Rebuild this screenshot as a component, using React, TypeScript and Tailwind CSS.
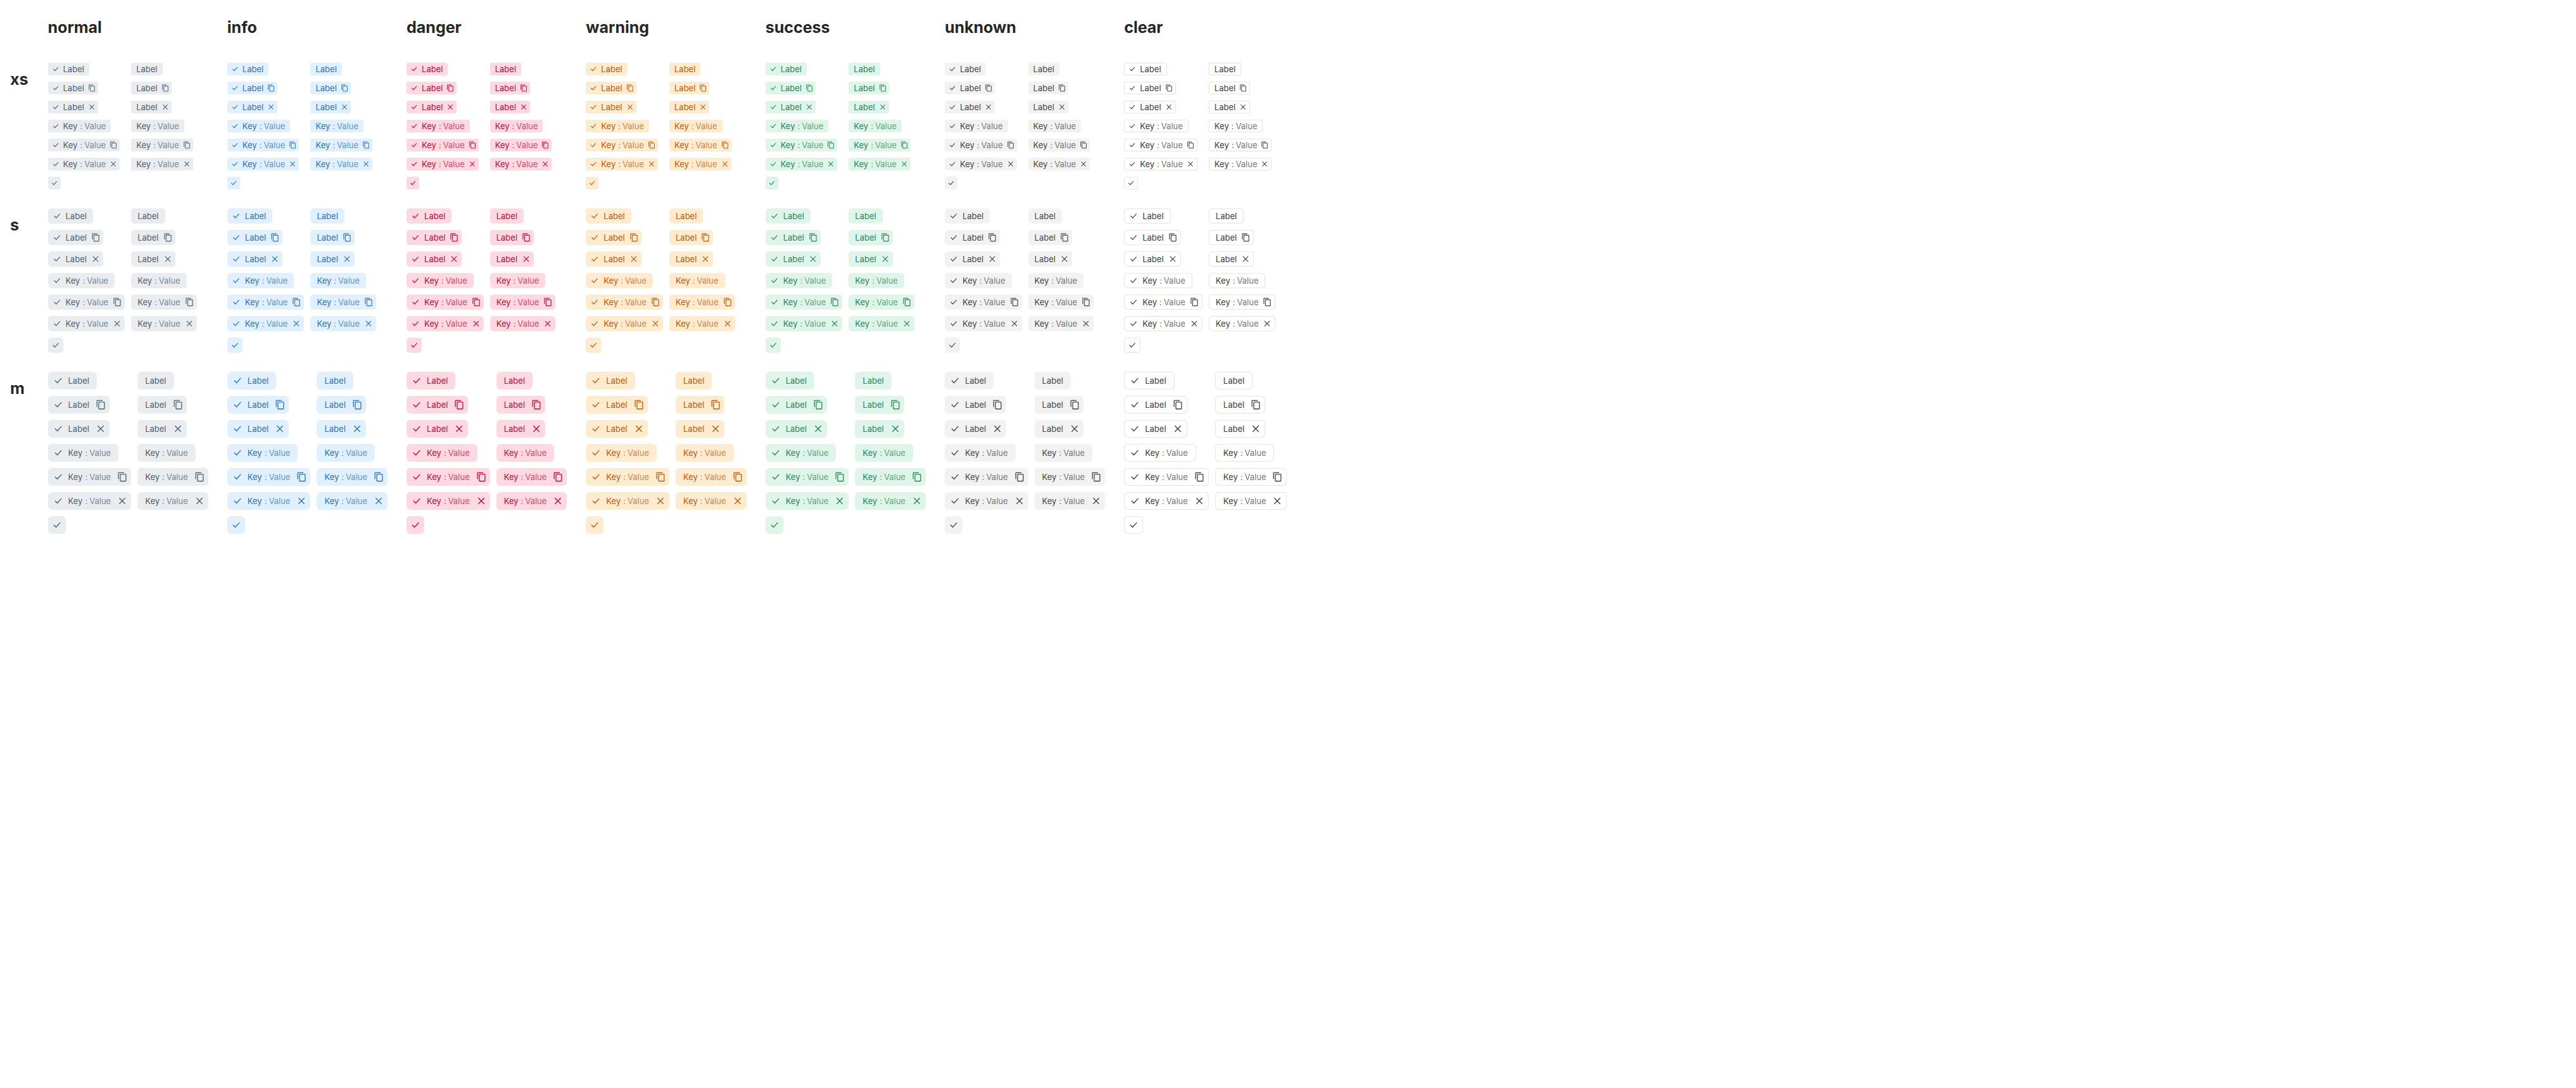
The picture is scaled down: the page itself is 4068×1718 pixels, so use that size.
import React from 'react';

type Size = 'xs' | 's' | 'm';
type Action = 'copy' | 'close';

const themes = [
  { name: 'normal', chip: 'bg-[#e9edf0] text-[#4d6073]' },
  { name: 'info', chip: 'bg-[#e0f0fe] text-[#2f72b8]' },
  { name: 'danger', chip: 'bg-[#ffd9e1] text-[#bf0a3a]' },
  { name: 'warning', chip: 'bg-[#ffebd0] text-[#bf5a0a]' },
  { name: 'success', chip: 'bg-[#dff5e9] text-[#2b8556]' },
  { name: 'unknown', chip: 'bg-[#f2f2f2] text-[#474747]' },
  { name: 'clear', chip: 'border-x border-[#e5e5e5] shadow-[inset_0_1px_0_#e5e5e5,inset_0_-1px_0_#e5e5e5] text-[#404040]' },
];

const sizes: Size[] = ['xs', 's', 'm'];

const styles = {
  xs: { grid: 'grid-cols-[1fr_1fr]', chip: 'h-5 rounded-[3px]', lead: 'w-6', square: 'w-5', icon: 'size-3', padStart: 'pl-2', padEnd: 'pr-2', action: 'ml-0.5 size-5' },
  s: { grid: 'grid-cols-[1fr_1fr]', chip: 'h-6 rounded-[5px]', lead: 'w-7', square: 'w-6', icon: 'size-3.5', padStart: 'pl-2.5', padEnd: 'pr-2.5', action: 'ml-0.5 size-6' },
  m: { grid: 'grid-cols-[auto_auto]', chip: 'h-7 rounded-md', lead: 'w-8', square: 'w-7', icon: 'size-4', padStart: 'pl-3', padEnd: 'pr-3', action: 'ml-1 size-7' },
};

function CheckIcon({ className }: { className: string }) {
  return (
    <svg viewBox="0 0 16 16" fill="none" stroke="currentColor" strokeWidth="1.4" className={className} aria-hidden="true">
      <path d="M2.900 7.700l3.700 3.800L13.200 4.100" />
    </svg>
  );
}

function CopyIcon({ className }: { className: string }) {
  return (
    <svg viewBox="0 0 16 16" fill="currentColor" className={className} aria-hidden="true">
      <path d="M11 .7H2.900C2.100.7 1.500 1.300 1.500 2.100V11.500h1.300V2H11zM13.100 3.200H5.700c-.8 0-1.400.6-1.400 1.400v9.400c0 .8.6 1.400 1.400 1.400h7.400c.8 0 1.400-.6 1.400-1.400V4.600c0-.8-.6-1.400-1.400-1.400zm.1 10.900H5.600V4.500h7.600z" />
    </svg>
  );
}

function CloseIcon({ className }: { className: string }) {
  return (
    <svg viewBox="0 0 16 16" fill="none" stroke="currentColor" strokeWidth="1.4" className={className} aria-hidden="true">
      <path d="M3.300 3.300l9.400 9.400M12.700 3.300l-9.400 9.400" />
    </svg>
  );
}

interface ChipProps {
  size: Size;
  theme: string;
  icon?: boolean;
  text?: string;
  value?: string;
  action?: Action;
}

function Chip({ size, theme, icon, text, value, action }: ChipProps) {
  const s = styles[size];
  return (
    <div className={`inline-flex items-center text-[13px] leading-[18px] ${s.chip} ${theme}`}>
      {icon && (
        <span className={`flex justify-center ${text ? s.lead : s.square}`}>
          <CheckIcon className={s.icon} />
        </span>
      )}
      {text && (
        <span className={`whitespace-nowrap ${icon ? '' : s.padStart} ${action ? '' : s.padEnd}`}>
          {text}
          {value && (
            <span className="opacity-70">
              <span className="mr-[3px] ml-1">:</span>
              {value}
            </span>
          )}
        </span>
      )}
      {action && (
        <button type="button" aria-label={action === 'copy' ? 'Copy' : 'Remove'} className={`flex items-center justify-center ${s.action}`}>
          {action === 'copy' ? <CopyIcon className={s.icon} /> : <CloseIcon className={s.icon} />}
        </button>
      )}
    </div>
  );
}

const rows: { text: string; value?: string; action?: Action }[] = [
  { text: 'Label' },
  { text: 'Label', action: 'copy' },
  { text: 'Label', action: 'close' },
  { text: 'Key', value: 'Value' },
  { text: 'Key', value: 'Value', action: 'copy' },
  { text: 'Key', value: 'Value', action: 'close' },
];

export default function App() {
  return (
    <main className="min-h-screen bg-white font-['Inter',sans-serif] text-[#262626]">
      <table className="border-collapse">
        <thead>
          <tr>
            <td />
            {themes.map((t) => (
              <th key={t.name} scope="col" className="px-[15px] pt-[25px] pb-[23px] text-left text-[25px] leading-9 font-bold">
                {t.name}
              </th>
            ))}
          </tr>
        </thead>
        <tbody>
          {sizes.map((size) => (
            <tr key={size}>
              <th scope="row" className="pt-[23px] pr-4 pl-4 text-left align-top text-[25px] leading-9 font-bold">
                {size}
              </th>
              {themes.map((t) => (
                <td key={t.name} className="p-[15px] align-top">
                  <div className={`grid justify-items-start gap-2.5 ${styles[size].grid}`}>
                    {rows.map((row, i) => (
                      <React.Fragment key={i}>
                        <Chip size={size} theme={t.chip} icon {...row} />
                        <Chip size={size} theme={t.chip} {...row} />
                      </React.Fragment>
                    ))}
                    <Chip size={size} theme={t.chip} icon />
                  </div>
                </td>
              ))}
            </tr>
          ))}
        </tbody>
      </table>
    </main>
  );
}
